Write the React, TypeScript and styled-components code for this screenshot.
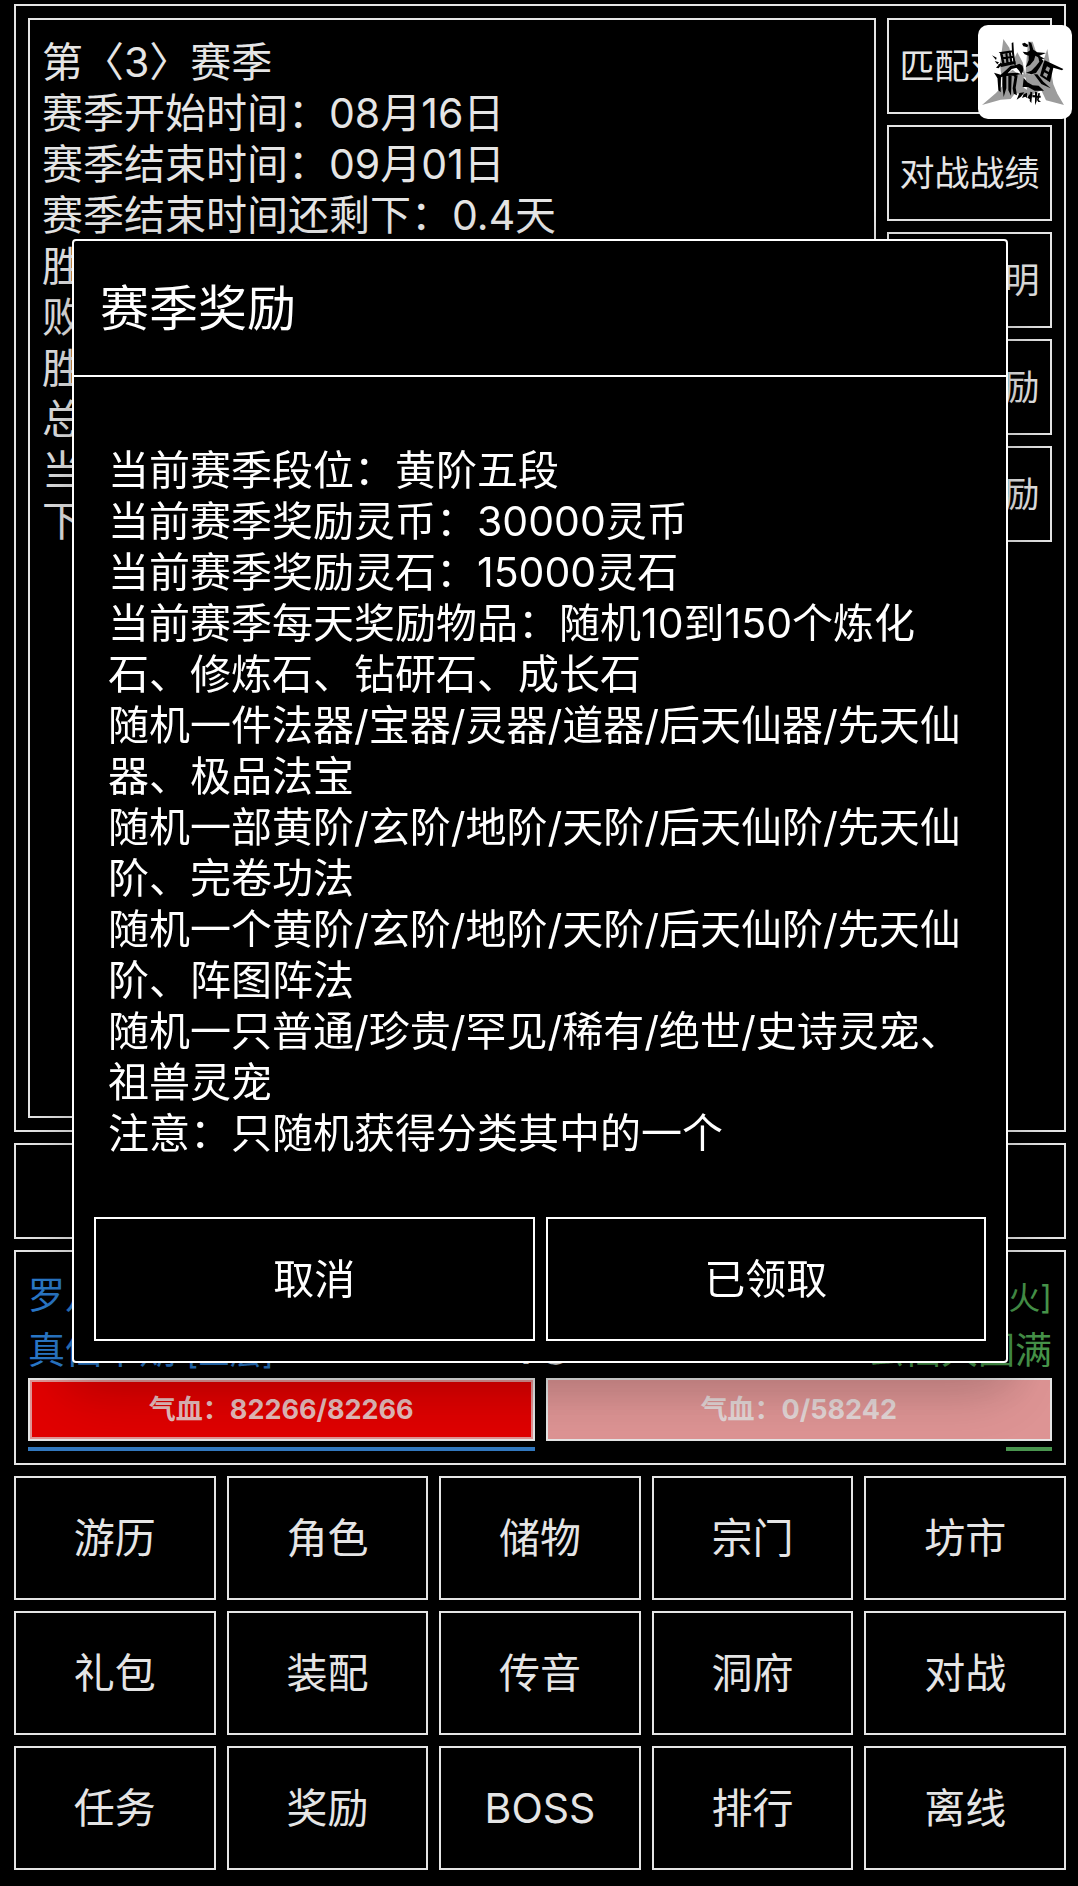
import React from "react";
import styled, { createGlobalStyle } from "styled-components";

const GlobalStyle = createGlobalStyle`
  *, *::before, *::after { box-sizing: border-box; }
  body {
    margin: 0;
    background: #000;
    color: #fff;
    font-family: Inter, "Noto Sans CJK SC", sans-serif;
    font-size: 41px;
    line-height: 51px;
  }
`;

const Screen = styled.main`
  min-height: 100vh;
  padding: 4px 12px 16px 14px;
  display: flex;
  flex-direction: column;
  gap: 11px;
`;

const Panel = styled.section`
  border: 2px solid #fff;
  padding: 12px;
`;

const SeasonPanel = styled(Panel)`
  flex: 1;
  display: flex;
  gap: 11px;
`;

const SeasonInfo = styled.div`
  flex: 1;
  min-width: 0;
  border: 2px solid #fff;
  padding: 17px 12px;
`;

const Line = styled.p`
  margin: 0;
`;

const SideMenu = styled.nav`
  width: 165px;
  display: flex;
  flex-direction: column;
  gap: 11px;
`;

const BoxButton = styled.button<{ $small?: boolean }>`
  width: 100%;
  height: ${(p) => (p.$small ? 96 : 124)}px;
  padding: 0;
  border: 2px solid #fff;
  background: #000;
  color: #fff;
  font-family: inherit;
  font-size: ${(p) => (p.$small ? 35 : 41)}px;
  line-height: 51px;
  white-space: nowrap;
  overflow: hidden;
`;

const NoticeBar = styled.section`
  height: 96px;
  border: 2px solid #fff;
`;

const Fighters = styled.div`
  display: grid;
  grid-template-columns: 1fr auto 1fr;
  align-items: end;
  padding-top: 4px;
  font-size: 37px;
  line-height: 55px;
`;

const Fighter = styled.div<{ $enemy?: boolean }>`
  color: ${(p) => (p.$enemy ? "#50a854" : "#2f87e0")};
  text-align: ${(p) => (p.$enemy ? "right" : "left")};
`;

const Tag = styled.span`
  font-size: 32px;
  line-height: 1;
`;

const Versus = styled.strong`
  padding-bottom: 2px;
  font-size: 44px;
  font-weight: 400;
`;

const Duel = styled.div`
  display: grid;
  grid-template-columns: 1fr 1fr;
  gap: 6px 11px;
`;

const Health = styled.div`
  height: 63px;
  display: grid;
  border: 2px solid #fff;
  padding: 2px;
  background: #f7a5a5;

  > * {
    grid-area: 1 / 1;
  }
`;

const HealthFill = styled.div`
  background: #fa0000;
`;

const HealthText = styled.span`
  place-self: center;
  color: rgba(255, 255, 255, 0.84);
  font-size: 27px;
  font-weight: 700;
`;

const Timer = styled.div<{ $enemy?: boolean }>`
  height: 4px;
  justify-self: ${(p) => (p.$enemy ? "end" : "start")};
  background: ${(p) => (p.$enemy ? "#52a557" : "#3785d3")};
`;

const MainMenu = styled.nav`
  display: grid;
  grid-template-columns: repeat(5, 1fr);
  gap: 11px;
`;

const Backdrop = styled.div`
  position: fixed;
  inset: 0;
  display: flex;
  align-items: flex-start;
  padding: 239px 70px 0 72px;
  background: rgba(0, 0, 0, 0.1);
`;

const Dialog = styled.div`
  flex: 1;
  min-width: 0;
  border: 2px solid #fff;
  border-radius: 4px;
  background: #000;
  box-shadow:
    0 28px 64px 4px rgba(0, 0, 0, 0.16),
    0 12px 46px 8px rgba(0, 0, 0, 0.1);
`;

const DialogTitle = styled.h1`
  margin: 0;
  padding: 41px 26px 39px;
  border-bottom: 2px solid #fff;
  font-size: 49px;
  font-weight: 400;
  line-height: 54px;
`;

const DialogBody = styled.div`
  padding: 68px 34px 58px;
`;

const DialogActions = styled.div`
  display: flex;
  gap: 11px;
  padding: 0 20px 20px;
`;

const FloatingButton = styled.button`
  position: fixed;
  top: 25px;
  right: 6px;
  width: 94px;
  height: 94px;
  padding: 0;
  border: 0;
  border-radius: 10px;
  background: #fff;

  svg {
    display: block;
    width: 100%;
    height: 100%;
  }
`;

const seasonLines = [
  "第〈3〉赛季",
  "赛季开始时间：08月16日",
  "赛季结束时间：09月01日",
  "赛季结束时间还剩下：0.4天",
  "胜场",
  "败场",
  "胜率",
  "总场",
  "当前",
  "下级",
];

const sideItems = ["匹配对战", "对战战绩", "赛季说明", "赛季奖励", "每日奖励"];

const rewardLines = [
  "当前赛季段位：黄阶五段",
  "当前赛季奖励灵币：30000灵币",
  "当前赛季奖励灵石：15000灵石",
  "当前赛季每天奖励物品：随机10到150个炼化石、修炼石、钻研石、成长石",
  "随机一件法器/宝器/灵器/道器/后天仙器/先天仙器、极品法宝",
  "随机一部黄阶/玄阶/地阶/天阶/后天仙阶/先天仙阶、完卷功法",
  "随机一个黄阶/玄阶/地阶/天阶/后天仙阶/先天仙阶、阵图阵法",
  "随机一只普通/珍贵/罕见/稀有/绝世/史诗灵宠、祖兽灵宠",
  "注意：只随机获得分类其中的一个",
];

const menuItems = [
  "游历", "角色", "储物", "宗门", "坊市",
  "礼包", "装配", "传音", "洞府", "对战",
  "任务", "奖励", "BOSS", "排行", "离线",
];

function Emblem() {
  return (
    <svg viewBox="0 0 282 282" aria-hidden="true">
      <g fill="#9c9c9c">
        <path d="M76 42 L94 68 L104 110 L118 82 L134 112 L142 150 L150 50 L164 50 L178 92 L196 108 L208 72 L216 120 L226 178 L238 206 L258 240 L204 226 L190 196 L170 205 L160 214 L112 204 L98 222 L68 224 L12 240 L54 204 L74 182 L66 120 Z" />
      </g>
      <g fill="#fff">
        <path d="M84 150 L104 124 L124 128 L138 148 L118 146 L104 134 Z" />
        <path d="M137 156 L143 158 L147 194 L137 188 Z" />
        <path d="M150 148 L166 134 L184 118 L180 132 L164 148 Z" />
      </g>
      <g fill="#000">
        <path d="M42 91 L56 98 L54 105 Z M50 108 L63 112 L58 118 Z M54 128 L68 113 L72 116 L62 130 Z" />
        <path d="M62 82 L104 76 L105 82 L70 88 Z M66 86 L74 86 L80 116 L73 117 Z M101 54 L106 52 L108 84 L114 125 L107 116 L102 85 Z M82 86 L88 85 L92 114 L85 115 Z M93 84 L99 83 L103 112 L97 113 Z M72 97 L106 92 L106 98 L73 103 Z M60 118 L112 108 L114 116 L70 126 Z" />
        <path d="M48 143 L68 149 L82 137 L98 122 L120 120 L137 130 L116 128 L101 132 L89 145 L118 143 L128 147 L116 150 L113 158 L106 152 L84 153 L58 159 Z" />
        <path d="M58 154 L69 154 L68 202 L61 196 Z M74 152 L85 153 L85 190 L77 216 L73 180 Z M91 152 L101 153 L99 212 L91 196 Z M110 152 L119 151 L113 188 L117 211 L107 206 L104 190 Z" />
        <path d="M132 56 L140 53 L151 60 L148 67 L136 64 Z M152 50 L160 54 L166 74 L178 82 L204 84 L184 92 L200 101 L190 102 L172 92 L168 106 L156 120 L143 127 L152 106 L152 92 L140 88 L134 80 L148 82 L156 76 Z" />
        <path d="M110 122 L124 116 L134 122 L136 136 L130 150 L124 138 Z M144 143 L160 137 L174 123 L184 110 L180 94 L190 100 L196 108 L186 126 L174 144 L160 148 Z" />
        <path d="M200 106 L256 132 L252 136 L226 128 L216 172 L186 152 L196 116 Z M207 124 L202 135 L212 141 L216 129 Z M199 142 L195 151 L206 158 L210 148 Z" fillRule="evenodd" />
        <path d="M168 148 L178 148 L196 170 L218 190 L190 177 Z" />
        <path d="M137 158 L148 172 L164 181 L182 182 L198 197 L170 197 L150 186 L134 186 Z" />
        <path d="M124 204 L139 202 L129 215 L116 224 Z M137 208 L147 203 L148 220 L142 215 L132 219 Z M151 212 L160 203 L163 206 L156 216 L163 218 L156 223 L149 219 Z M163 210 L188 212 L188 218 L163 217 Z M171 200 L178 202 L176 229 L171 241 Z M157 200 L163 202 L160 234 L155 228 Z M181 204 L186 205 L182 225 L189 230 L181 231 L177 225 Z" />
      </g>
    </svg>
  );
}

export default function App() {
  return (
    <>
      <GlobalStyle />
      <Screen>
        <SeasonPanel>
          <SeasonInfo>
            {seasonLines.map((line) => (
              <Line key={line}>{line}</Line>
            ))}
          </SeasonInfo>
          <SideMenu>
            {sideItems.map((item) => (
              <BoxButton key={item} type="button" $small>
                {item}
              </BoxButton>
            ))}
          </SideMenu>
        </SeasonPanel>
        <NoticeBar />
        <Panel>
          <Fighters>
            <Fighter>
              <Line>罗凡</Line>
              <Line>
                真仙中期 <Tag>[三层]</Tag>
              </Line>
            </Fighter>
            <Versus>VS</Versus>
            <Fighter $enemy>
              <Line>
                <Tag>[火]</Tag>
              </Line>
              <Line>玄仙大圆满</Line>
            </Fighter>
          </Fighters>
          <Duel>
            <Health>
              <HealthFill style={{ width: `${(82266 / 82266) * 100}%` }} />
              <HealthText>气血：82266/82266</HealthText>
            </Health>
            <Health>
              <HealthFill style={{ width: `${(0 / 58242) * 100}%` }} />
              <HealthText>气血：0/58242</HealthText>
            </Health>
            <Timer style={{ width: "100%" }} />
            <Timer $enemy style={{ width: "9%" }} />
          </Duel>
        </Panel>
        <MainMenu>
          {menuItems.map((item) => (
            <BoxButton key={item} type="button">
              {item}
            </BoxButton>
          ))}
        </MainMenu>
      </Screen>
      <Backdrop>
        <Dialog role="dialog" aria-modal="true" aria-labelledby="reward-title">
          <DialogTitle id="reward-title">赛季奖励</DialogTitle>
          <DialogBody>
            {rewardLines.map((line) => (
              <Line key={line}>{line}</Line>
            ))}
          </DialogBody>
          <DialogActions>
            <BoxButton type="button">取消</BoxButton>
            <BoxButton type="button">已领取</BoxButton>
          </DialogActions>
        </Dialog>
      </Backdrop>
      <FloatingButton type="button" aria-label="悬浮菜单">
        <Emblem />
      </FloatingButton>
    </>
  );
}
